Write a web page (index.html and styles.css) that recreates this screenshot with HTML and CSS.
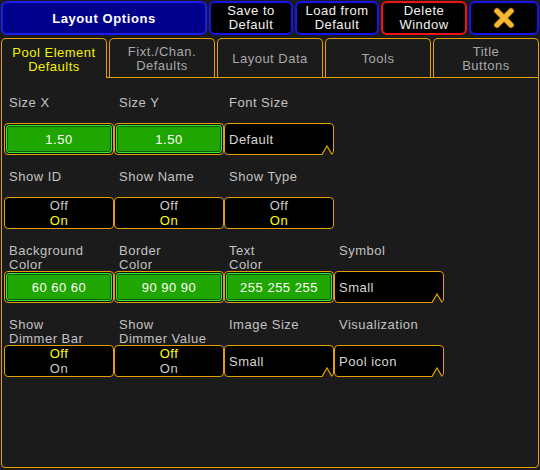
FILE: index.html
```html
<!DOCTYPE html>
<html>
<head>
<meta charset="utf-8">
<link rel="stylesheet" href="styles.css">
</head>
<body>
<div class="app">
  <header class="header">
    <div class="title">Layout Options</div>
    <div class="hbtn w84">Save to<br>Default</div>
    <div class="hbtn w84">Load from<br>Default</div>
    <div class="hbtn danger">Delete<br>Window</div>
    <div class="hbtn close">
      <svg width="24" height="22" viewBox="0 0 24 22">
        <line x1="5" y1="4" x2="19" y2="18" stroke="#c88a10" stroke-width="6" stroke-linecap="round"/>
        <line x1="19" y1="4" x2="5" y2="18" stroke="#c88a10" stroke-width="6" stroke-linecap="round"/>
        <line x1="5" y1="4" x2="19" y2="18" stroke="#f6bb34" stroke-width="4" stroke-linecap="round"/>
        <line x1="19" y1="4" x2="5" y2="18" stroke="#f6bb34" stroke-width="4" stroke-linecap="round"/>
      </svg>
    </div>
  </header>
  <nav class="tabs">
    <div class="tab active">Pool Element<br>Defaults</div>
    <div class="tab">Fixt./Chan.<br>Defaults</div>
    <div class="tab">Layout Data</div>
    <div class="tab">Tools</div>
    <div class="tab">Title<br>Buttons</div>
  </nav>
  <main class="panel">
    <div class="grid">
      <div class="field"><div class="label">Size X</div><div class="btn green"><div class="inner">1.50</div></div></div>
      <div class="field"><div class="label">Size Y</div><div class="btn green"><div class="inner">1.50</div></div></div>
      <div class="field"><div class="label">Font Size</div><div class="btn drop">Default<svg class="notch" width="10" height="10" viewBox="0 0 10 10"><polygon points="0,10 5,1 10,10" fill="#1b1b1b"/><polyline points="0,9.5 5,1 10,9.5" fill="none" stroke="#e3a000" stroke-width="1.2"/></svg></div></div>
      <div class="field"></div>

      <div class="field"><div class="label">Show ID</div><div class="btn toggle"><span>Off</span><span class="on">On</span></div></div>
      <div class="field"><div class="label">Show Name</div><div class="btn toggle"><span>Off</span><span class="on">On</span></div></div>
      <div class="field"><div class="label">Show Type</div><div class="btn toggle"><span>Off</span><span class="on">On</span></div></div>
      <div class="field"></div>

      <div class="field"><div class="label">Background<br>Color</div><div class="btn green"><div class="inner">60 60 60</div></div></div>
      <div class="field"><div class="label">Border<br>Color</div><div class="btn green"><div class="inner">90 90 90</div></div></div>
      <div class="field"><div class="label">Text<br>Color</div><div class="btn green"><div class="inner">255 255 255</div></div></div>
      <div class="field"><div class="label">Symbol</div><div class="btn drop">Small<svg class="notch" width="10" height="10" viewBox="0 0 10 10"><polygon points="0,10 5,1 10,10" fill="#1b1b1b"/><polyline points="0,9.5 5,1 10,9.5" fill="none" stroke="#e3a000" stroke-width="1.2"/></svg></div></div>

      <div class="field"><div class="label">Show<br>Dimmer Bar</div><div class="btn toggle"><span class="on">Off</span><span>On</span></div></div>
      <div class="field"><div class="label">Show<br>Dimmer Value</div><div class="btn toggle"><span class="on">Off</span><span>On</span></div></div>
      <div class="field"><div class="label">Image Size</div><div class="btn drop">Small<svg class="notch" width="10" height="10" viewBox="0 0 10 10"><polygon points="0,10 5,1 10,10" fill="#1b1b1b"/><polyline points="0,9.5 5,1 10,9.5" fill="none" stroke="#e3a000" stroke-width="1.2"/></svg></div></div>
      <div class="field"><div class="label">Visualization</div><div class="btn drop">Pool icon<svg class="notch" width="10" height="10" viewBox="0 0 10 10"><polygon points="0,10 5,1 10,10" fill="#1b1b1b"/><polyline points="0,9.5 5,1 10,9.5" fill="none" stroke="#e3a000" stroke-width="1.2"/></svg></div></div>
    </div>
  </main>
</div>
</body>
</html>
```

FILE: styles.css
```css
* { box-sizing: border-box; }
html, body {
  margin: 0;
  padding: 0;
  background: #1b1b1b;
  width: 540px;
  height: 470px;
  overflow: hidden;
}
body {
  font-family: "Liberation Sans", Arial, sans-serif;
  font-size: 13px;
  letter-spacing: 0.5px;
  color: #c4c4c4;
}
.app {
  width: 540px;
  height: 470px;
  padding: 1px 1px 2px 1px;
  display: flex;
  flex-direction: column;
}
.header {
  display: flex;
  gap: 2px;
  height: 34px;
  flex: none;
}
.title {
  width: 206px;
  background: #00008a;
  border: 2px solid #1c1cf0;
  border-radius: 6px;
  color: #ffffff;
  font-weight: bold;
  display: flex;
  align-items: center;
  justify-content: center;
  letter-spacing: 0.6px;
}
.hbtn {
  background: #000;
  border: 2px solid #1414ee;
  border-radius: 6px;
  color: #f2f2f2;
  line-height: 14px;
  text-align: center;
  display: flex;
  align-items: center;
  justify-content: center;
}
.w84 { width: 84px; }
.danger { width: 86px; border-color: #ee1414; }
.close { flex: 1; }
.tabs {
  display: flex;
  gap: 2px;
  margin-top: 3px;
  height: 39px;
  flex: none;
  position: relative;
  z-index: 1;
}
.tab {
  flex: 1;
  background: #1b1b1b;
  border: 1px solid #e3a000;
  border-bottom: none;
  border-radius: 5px 5px 0 0;
  color: #a8a8a8;
  text-align: center;
  line-height: 14px;
  display: flex;
  align-items: center;
  justify-content: center;
  padding-top: 2px;
}
.tab.active {
  color: #f2f200;
  height: 40px;
}
.panel {
  flex: 1;
  border: 1px solid #e3a000;
  border-radius: 0 0 4px 4px;
  padding: 3px 2px;
}
.grid {
  display: grid;
  grid-template-columns: repeat(4, 110px);
  grid-auto-rows: 74px;
}
.label {
  height: 42px;
  padding-top: 15px;
  padding-left: 5px;
  line-height: 14px;
  color: #c2c2c2;
  white-space: nowrap;
}
.btn {
  height: 32px;
  border: 1px solid #e3a000;
  border-radius: 4px;
  background: #000;
  position: relative;
  color: #d6d6d6;
}
.btn.green {
  padding: 1px;
  background: #101010;
}
.btn.green .inner {
  height: 100%;
  background: #20a600;
  border: 1px solid #34e834;
  box-shadow: inset 0 0 0 1px #0c5a0c;
  border-radius: 3px;
  color: #ffffff;
  display: flex;
  align-items: center;
  justify-content: center;
}
.btn.drop {
  display: flex;
  align-items: center;
  padding-left: 4px;
}
.notch {
  position: absolute;
  right: 1px;
  bottom: -1px;
  display: block;
}
.btn.toggle {
  display: flex;
  flex-direction: column;
  align-items: center;
  justify-content: center;
  line-height: 15px;
  color: #cacaca;
}
.btn.toggle .on { color: #ffff00; }
```
